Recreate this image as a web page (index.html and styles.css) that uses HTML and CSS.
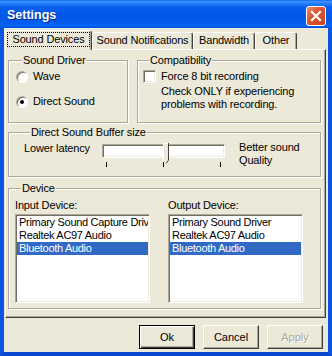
FILE: index.html
```html
<!DOCTYPE html>
<html lang="en">
<head>
    <meta charset="UTF-8">
    <title>Settings</title>
    <link rel="stylesheet" href="styles.css">
</head>
<body>
    <div class="window">
        <!-- Title bar -->
        <div class="titlebar">
            <span class="title">Settings</span>
            <span class="close">
                <svg width="18" height="18" viewBox="0 0 18 18">
                    <path d="M5 5 L13 13 M13 5 L5 13" stroke="#fff" stroke-width="2.2" stroke-linecap="square"/>
                </svg>
            </span>
        </div>

        <div class="client">
            <!-- Tabs -->
            <div class="tabs">
                <div class="tab tab-devices active"><span class="focus">Sound Devices</span></div>
                <div class="tab tab-notify">Sound Notifications</div>
                <div class="tab tab-bandwidth">Bandwidth</div>
                <div class="tab tab-other">Other</div>
            </div>

            <div class="panel">
                <div class="top-row">
                    <fieldset class="group driver">
                        <legend>Sound Driver</legend>
                        <div class="option"><span class="radio"></span>Wave</div>
                        <div class="option"><span class="radio checked"></span>Direct Sound</div>
                    </fieldset>
                    <fieldset class="group compat">
                        <legend>Compatibility</legend>
                        <div class="option"><span class="checkbox"></span>Force 8 bit recording</div>
                        <p class="note">Check ONLY if experiencing<br>problems with recording.</p>
                    </fieldset>
                </div>

                <fieldset class="group buffer">
                    <legend>Direct Sound Buffer size</legend>
                    <div class="slider-row">
                        <span class="slider-label">Lower latency</span>
                        <div class="slider">
                            <div class="track"></div>
                            <svg class="thumb" width="6" height="21" viewBox="0 0 6 21">
                                <polygon points="0,0 6,0 6,17 3,20.5 0,17" fill="#ECE9D8"/>
                                <polyline points="0.5,17 0.5,0.5 5,0.5" fill="none" stroke="#fff"/>
                                <polyline points="5.5,0 5.5,17.2 3,20.3" fill="none" stroke="#404040"/>
                            </svg>
                            <div class="ticks"><i></i><i></i><i></i></div>
                        </div>
                        <span class="slider-label end">Better sound<br>Quality</span>
                    </div>
                </fieldset>

                <fieldset class="group device">
                    <legend>Device</legend>
                    <div class="device-cols">
                        <div class="device-col">
                            <div class="device-label">Input Device:</div>
                            <ul class="listbox">
                                <li>Primary Sound Capture Driver</li>
                                <li>Realtek AC97 Audio</li>
                                <li class="selected">Bluetooth Audio</li>
                            </ul>
                        </div>
                        <div class="device-col">
                            <div class="device-label">Output Device:</div>
                            <ul class="listbox">
                                <li>Primary Sound Driver</li>
                                <li>Realtek AC97 Audio</li>
                                <li class="selected">Bluetooth Audio</li>
                            </ul>
                        </div>
                    </div>
                </fieldset>
            </div>

            <!-- Dialog buttons -->
            <div class="buttons">
                <button class="btn default">Ok</button>
                <button class="btn">Cancel</button>
                <button class="btn" disabled>Apply</button>
            </div>
        </div>
    </div>
</body>
</html>
```

FILE: styles.css
```css
/* General */
body {
    margin: 0;
    font-family: "Liberation Sans", Arial, sans-serif;
    font-size: 11px;
    letter-spacing: -0.15px;
    line-height: 13px;
    color: #000;
}

.window {
    width: 332px;
    height: 356px;
    display: flex;
    flex-direction: column;
}

/* Title bar */
.titlebar {
    height: 28px;
    flex: none;
    box-sizing: border-box;
    display: flex;
    align-items: center;
    justify-content: space-between;
    padding: 0 6px 0 7px;
    background: linear-gradient(to bottom, #0A5FEC 0%, #3C95FF 5%, #2A83FA 11%, #0860EC 25%, #0157E8 55%, #035CEE 82%, #0966F6 90%, #0050DC 100%);
}

.title {
    font-weight: bold;
    font-size: 12.5px;
    letter-spacing: 0;
    color: #fff;
    padding-top: 3px;
    text-shadow: 1px 1px #0A2D8C;
}

.close {
    width: 20px;
    height: 20px;
    margin-top: 4px;
    box-sizing: border-box;
    border: 1px solid #fff;
    border-radius: 3px;
    background: linear-gradient(135deg, #EC8A6C 0%, #DC5A34 40%, #C9421C 100%);
    display: flex;
    align-items: center;
    justify-content: center;
}

/* Client area */
.client {
    flex: 1;
    background-color: #ECE9D8;
    border: 4px solid #0A55E2;
    border-top: 0;
    border-bottom-color: #0A49CF;
    padding: 2px 2px 3px 1px;
    display: flex;
    flex-direction: column;
}

/* Tabs */
.tabs {
    height: 19px;
    flex: none;
    display: flex;
    align-items: flex-end;
}

.tab {
    height: 17px;
    box-sizing: border-box;
    padding-top: 1px;
    border: 1px solid;
    border-color: #fff #404040 transparent #fff;
    border-bottom: 0;
    border-radius: 3px 3px 0 0;
    box-shadow: inset -1px 0 #ACA899;
    text-align: center;
    white-space: nowrap;
}

.tab.active {
    height: 20px;
    margin-bottom: -1px;
    padding: 1px 1px 0 1px;
    background-color: #ECE9D8;
    position: relative;
    z-index: 1;
}

.focus {
    display: block;
    height: 15px;
    box-sizing: border-box;
    border: 1px dotted #000;
}

.tab-devices { width: 87px; }
.tab-notify { width: 101px; }
.tab-bandwidth { width: 62px; }
.tab-other { width: 42px; }

/* Tab page */
.panel {
    flex: 1;
    border: 1px solid;
    border-color: #fff #404040 #404040 #fff;
    box-shadow: inset -1px -1px #ACA899;
    padding: 0 4px 0 2px;
    display: flex;
    flex-direction: column;
}

.top-row {
    display: flex;
    gap: 9px;
    height: 69px;
    margin-top: 4px;
}

/* Group boxes */
.group {
    margin: 0;
    padding: 0;
    min-width: 0;
    box-sizing: border-box;
    border: 1px solid #ACA899;
    box-shadow: inset 1px 1px #fff, 1px 1px #fff;
}

.group legend {
    margin-left: 6px;
    padding: 0 1px;
    line-height: 13px;
    background-color: #ECE9D8;
}

.driver {
    width: 120px;
    padding: 3px 0 0 7px;
}

.compat {
    flex: 1;
    padding: 3px 0 0 5px;
}

.option {
    display: flex;
    align-items: center;
    gap: 5px;
    height: 13px;
    white-space: nowrap;
}

.driver .option + .option {
    margin-top: 12px;
}

.radio {
    width: 12px;
    height: 12px;
    box-sizing: border-box;
    border-radius: 50%;
    border: 1px solid;
    border-color: #ACA899 #fff #fff #ACA899;
    box-shadow: inset 1px 1px #716F64;
    background-color: #fff;
    display: flex;
    align-items: center;
    justify-content: center;
}

.radio.checked::after {
    content: "";
    width: 4px;
    height: 4px;
    border-radius: 50%;
    background-color: #000;
}

.checkbox {
    width: 13px;
    height: 13px;
    flex: none;
    box-sizing: border-box;
    border: 1px solid;
    border-color: #ACA899 #fff #fff #ACA899;
    box-shadow: inset 1px 1px #716F64, inset -1px -1px #F1EFE2;
    background-color: #fff;
}

.note {
    margin: 2px 0 0 0;
    padding-left: 18px;
    white-space: nowrap;
}

/* Buffer slider */
.buffer {
    height: 51px;
    margin-top: 3px;
    padding: 2px 0 0 15px;
}

.slider-row {
    display: flex;
    align-items: flex-start;
}

.slider-label {
    width: 78px;
    margin-top: 1px;
    white-space: nowrap;
}

.slider-label.end {
    width: auto;
    margin-top: 0;
}

.slider {
    width: 123px;
    margin: 3px 14px 0 0;
    position: relative;
}

.track {
    height: 14px;
    box-sizing: border-box;
    border: 1px solid;
    border-color: #ACA899 #fff #fff #ACA899;
    box-shadow: inset 1px 1px #716F64, inset -1px -1px #F1EFE2;
    background-color: #fff;
}

.thumb {
    position: absolute;
    left: 61px;
    top: -1px;
}

.ticks {
    display: flex;
    justify-content: space-between;
    padding: 0 4px;
    margin-top: 4px;
}

.ticks i {
    width: 1px;
    height: 5px;
    background-color: #000;
}

/* Devices */
.device {
    height: 127px;
    margin-top: 5px;
    padding: 4px 0 0 6px;
}

.device-cols {
    display: flex;
    gap: 18px;
}

.device-col {
    width: 135px;
}

.device-label {
    white-space: nowrap;
}

.listbox {
    list-style: none;
    margin: 2px 0 0 0;
    padding: 1px;
    height: 89px;
    box-sizing: border-box;
    overflow: hidden;
    border: 1px solid;
    border-color: #ACA899 #fff #fff #ACA899;
    box-shadow: inset 1px 1px #716F64, inset -1px -1px #F1EFE2;
    background-color: #fff;
}

.listbox li {
    height: 13px;
    padding-left: 2px;
    letter-spacing: -0.3px;
    white-space: nowrap;
    overflow: hidden;
}

.listbox li.selected {
    background-color: #316AC5;
    color: #fff;
}

/* Bottom buttons */
.buttons {
    flex: none;
    display: flex;
    justify-content: flex-end;
    gap: 8px;
    margin: 7px 3px 0 0;
}

.btn {
    width: 56px;
    height: 24px;
    padding: 0;
    font: inherit;
    color: #000;
    background-color: #ECE9D8;
    border: 1px solid;
    border-color: #fff #404040 #404040 #fff;
    box-shadow: inset -1px -1px #ACA899;
}

.btn.default {
    border-color: #000;
    box-shadow: inset 1px 1px #fff, inset -1px -1px #404040, inset -2px -2px #ACA899;
}

.btn:disabled {
    color: #ACA899;
    text-shadow: 1px 1px #fff;
}
```
